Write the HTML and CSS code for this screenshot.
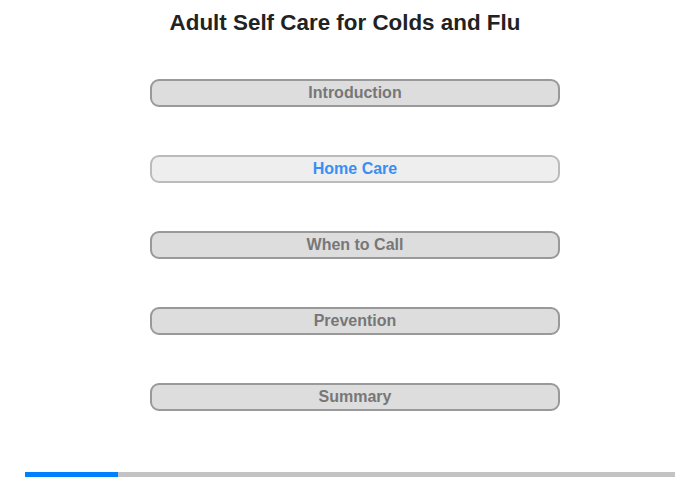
FILE: index.html
```html
<!DOCTYPE html>
<html lang="en">
<head>
  <meta charset="UTF-8" />
  <title>Adult Self Care for Colds and Flu</title>
  <link rel="stylesheet" href="styles.css">
</head>
<body>
  <h1>Adult Self Care for Colds and Flu</h1>

  <div class="menu">
    <button class="item">Introduction</button>
    <button class="item current">Home Care</button>
    <button class="item">When to Call</button>
    <button class="item">Prevention</button>
    <button class="item">Summary</button>
  </div>

  <div class="progress">
    <div class="bar" style="width: 14.3%"></div>
  </div>
</body>
</html>
```

FILE: styles.css
```css
body {
  font-family: "Liberation Sans", Arial, sans-serif;
  margin: 0;
  padding: 0;
  background: white;
  width: 700px;
  height: 480px;
  position: relative;
}
h1 {
  font-size: 22.4px;
  font-weight: bold;
  color: #222;
  text-align: center;
  margin: 0;
  padding-top: 10px;
  padding-right: 10px;
  line-height: 26px;
}
.menu {
  display: flex;
  flex-direction: column;
  align-items: center;
  gap: 48px;
  margin-top: 43px;
  padding-left: 10px;
}
.item {
  width: 410px;
  height: 28px;
  background: #dddddd;
  border: 2px solid #999;
  border-radius: 9px;
  color: #777;
  font-family: "Liberation Sans", Arial, sans-serif;
  font-size: 16px;
  font-weight: bold;
  padding: 0;
}
.item.current {
  background: #eeeeee;
  border-color: #bbb;
  color: #3a8ef2;
}
.progress {
  position: absolute;
  left: 25px;
  top: 472px;
  width: 650px;
  height: 5px;
  background: #c3c3c3;
}
.bar {
  height: 100%;
  background: #0080ff;
}
```
